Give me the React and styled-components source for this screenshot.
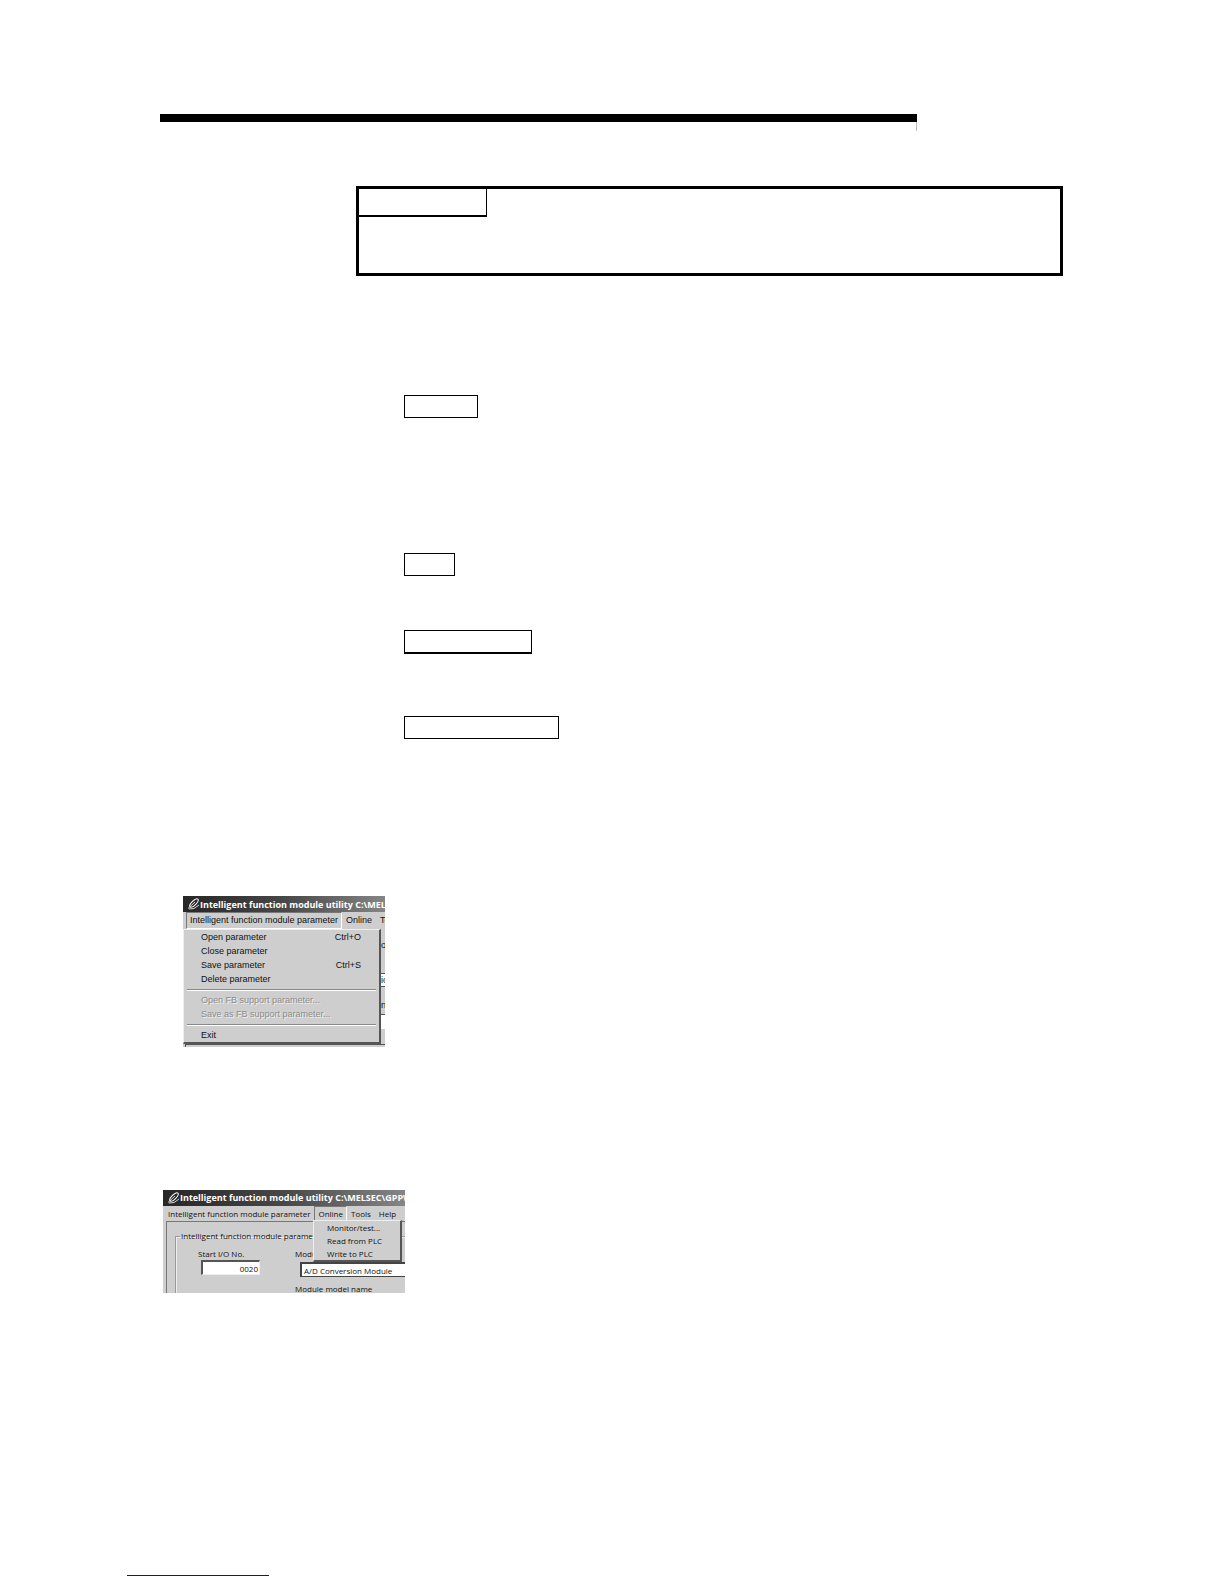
import React from "react";
import styled, { createGlobalStyle } from "styled-components";

const Global = createGlobalStyle`
  * { box-sizing: border-box; }
  body { margin: 0; background: #fff; }
  button, input { font: inherit; color: inherit; margin: 0; border-radius: 0; }
`;

const Page = styled.main`
  display: flex;
  flex-direction: column;
  align-items: flex-start;
  padding: 114px 161px 8px 160px;
  font-family: "Liberation Sans", Arial, sans-serif;
`;
const Rule = styled.div`
  align-self: stretch;
  margin-right: 146px;
  border-top: 8px solid #000;
  &::after {
    content: "";
    display: block;
    width: 1px;
    height: 9px;
    margin-left: auto;
    background: #bbb;
  }
`;
const Point = styled.section`
  align-self: stretch;
  margin: 55px 0 0 196px;
  height: 90px;
  border: 3px solid #000;
`;
const PointLabel = styled.div`
  width: 128px;
  height: 28px;
  border: solid #000;
  border-width: 0 1px 2px 0;
`;
const Steps = styled.section`
  display: flex;
  flex-direction: column;
  margin: 119px 0 0 244px;
`;
const Step = styled.div`
  width: ${(p) => p.$w}px;
  height: ${(p) => (p.$heavy ? 24 : 23)}px;
  margin-bottom: ${(p) => p.$gap}px;
  border: 1px solid #000;
  border-bottom-width: ${(p) => (p.$heavy ? 2 : 1)}px;
`;
const FootRule = styled.hr`
  width: 142px;
  height: 1px;
  border: 0;
  margin: 282px 0 0 -33px;
  background: #14147c;
`;

const Window = styled.section`
  position: relative;
  display: flex;
  flex-direction: column;
  width: ${(p) => p.$w}px;
  height: ${(p) => p.$h}px;
  margin: ${(p) => p.$top}px 0 0 ${(p) => p.$left}px;
  overflow: hidden;
  background: #cecece;
  color: #111;
  font-size: 9px;
  line-height: 13px;
  white-space: nowrap;
  ${(p) => p.$small && `font-family: "Open Sans", "Noto Sans", sans-serif; font-size: 8px; line-height: 12px;`}
`;
const TitleBar = styled.header`
  display: flex;
  align-items: center;
  flex: none;
  height: 16px;
  padding-left: 4px;
  background: linear-gradient(90deg, #262626, #484848 50%, #858585);
  color: #fff;
  font-family: "Open Sans", "Noto Sans", sans-serif;
  font-size: 9px;
  font-weight: bold;
  svg { flex: none; }
`;
const MenuBar = styled.nav`
  display: flex;
  align-items: stretch;
  flex: none;
  height: ${(p) => p.$h}px;
  padding-left: ${(p) => p.$left}px;
`;
const MenuButton = styled.button`
  flex: none;
  padding: 0 3px;
  border: 1px solid;
  border-color: ${(p) => (p.$open ? "#777 #fff #fff #777" : "transparent")};
  background: none;
`;
const Popup = styled.div`
  position: absolute;
  display: flex;
  flex-direction: column;
  top: ${(p) => p.$top}px;
  left: ${(p) => p.$left}px;
  width: ${(p) => p.$w}px;
  background: #cecece;
  border: solid;
  border-width: 1px 2px 2px 1px;
  border-color: #eee #555 #555 #eee;
`;
const Item = styled.button`
  display: flex;
  justify-content: space-between;
  height: ${(p) => p.$h || 14}px;
  padding: 0 18px 0 ${(p) => p.$indent || 17}px;
  border: 0;
  background: none;
  line-height: ${(p) => p.$h || 14}px;
  &:disabled { color: #8c8c8c; text-shadow: 1px 1px #eee; }
`;
const Separator = styled.hr`
  width: calc(100% - 6px);
  height: 2px;
  margin: 3px 3px 2px;
  border: 0;
  border-top: 1px solid #888;
  background: #fff;
`;
const Behind = styled.div`
  display: flex;
  flex-direction: column;
  flex: 1;
  padding-left: 197px;
  border-left: 1px solid #eee;
`;
const Sliver = styled.div`
  flex: none;
  height: ${(p) => p.$h}px;
  padding-top: ${(p) => p.$pt || 0}px;
  overflow: hidden;
  background: ${(p) => (p.$white ? "#fff" : "#cecece")};
  border-bottom: 1px solid ${(p) => p.$line || "#555"};
`;
const BottomEdge = styled.div`
  height: 3px;
  margin-left: 2px;
  border: solid #555;
  border-width: 1px 0 0 1px;
`;
const Client = styled.div`
  display: flex;
  flex: 1;
  margin: 0 0 0 3px;
  padding: 8px 0 0 8px;
  border: solid #777;
  border-width: 1px 0 0 1px;
`;
const Group = styled.fieldset`
  display: flex;
  flex: 1;
  min-width: 0;
  height: 90px;
  margin: 0;
  padding: 6px 0 0 22px;
  border: 1px solid #999;
  border-right: 0;
  box-shadow: inset 1px 1px #eee;
  legend { padding: 0 1px; margin-left: -18px; }
`;
const Column = styled.div`
  display: flex;
  flex: none;
  flex-direction: column;
  width: ${(p) => p.$w}px;
`;
const NumberField = styled.input`
  width: 59px;
  height: 15px;
  margin-left: 3px;
  padding: 0 1px;
  border: solid;
  border-width: 2px 1px 1px 2px;
  border-color: #555 #eee #eee #555;
  background: #fff;
  text-align: right;
`;
const ModuleField = styled.input`
  width: 130px;
  height: 15px;
  margin: 2px 0 6px 5px;
  padding: 0 2px;
  border: solid #444;
  border-width: 2px 1px 1px 2px;
  background: #fff;
`;

const Pen = () => (
  <svg width="13" height="12" viewBox="0 0 13 12" fill="none" stroke="#fff" aria-hidden="true">
    <ellipse cx="7" cy="5" rx="5.5" ry="2.2" transform="rotate(-45 7 5)" />
    <path d="M1 10.5L8 4M2 11Q7 12 12 7" strokeWidth="0.8" />
  </svg>
);

export default function App() {
  return (
    <>
      <Global />
      <Page>
        <Rule />
        <Point><PointLabel /></Point>
        <Steps>
          <Step $w={74} $gap={135} />
          <Step $w={51} $gap={54} />
          <Step $w={128} $gap={62} $heavy />
          <Step $w={155} $gap={0} />
        </Steps>

        <Window $w={202} $h={151} $top={157} $left={23}>
          <TitleBar><Pen />Intelligent function module utility C:\MELSEC</TitleBar>
          <MenuBar $h={17} $left={3}>
            <MenuButton $open>Intelligent function module parameter</MenuButton>
            <MenuButton>Online</MenuButton>
            <MenuButton>Tools</MenuButton>
          </MenuBar>
          <Behind>
            <Sliver $h={45} $pt={10}>ode</Sliver>
            <Sliver $h={13} $white>ion</Sliver>
            <Sliver $h={28} $pt={12}>nam</Sliver>
            <Sliver $h={14} $white $line="#fff" />
          </Behind>
          <BottomEdge />
          <Popup $top={33} $left={0} $w={198}>
            <Item>Open parameter<span>Ctrl+O</span></Item>
            <Item>Close parameter</Item>
            <Item>Save parameter<span>Ctrl+S</span></Item>
            <Item>Delete parameter</Item>
            <Separator />
            <Item disabled>Open FB support parameter...</Item>
            <Item disabled>Save as FB support parameter...</Item>
            <Separator />
            <Item>Exit</Item>
          </Popup>
        </Window>

        <Window $w={242} $h={103} $top={143} $left={3} $small>
          <TitleBar><Pen />Intelligent function module utility C:\MELSEC\GPPW\</TitleBar>
          <MenuBar $h={15} $left={1}>
            <MenuButton>Intelligent function module parameter</MenuButton>
            <MenuButton $open>Online</MenuButton>
            <MenuButton>Tools</MenuButton>
            <MenuButton>Help</MenuButton>
          </MenuBar>
          <Client>
            <Group>
              <legend>Intelligent function module parameter</legend>
              <Column $w={97}>
                <label htmlFor="start">Start I/O No.</label>
                <NumberField id="start" defaultValue="0020" />
              </Column>
              <Column $w={140}>
                <label htmlFor="module">Module type</label>
                <ModuleField id="module" defaultValue="A/D Conversion Module" />
                <span>Module model name</span>
              </Column>
            </Group>
          </Client>
          <Popup $top={30} $left={150} $w={89}>
            <Item $h={13} $indent={13}>Monitor/test...</Item>
            <Item $h={13} $indent={13}>Read from PLC</Item>
            <Item $h={13} $indent={13}>Write to PLC</Item>
          </Popup>
        </Window>
        <FootRule />
      </Page>
    </>
  );
}
